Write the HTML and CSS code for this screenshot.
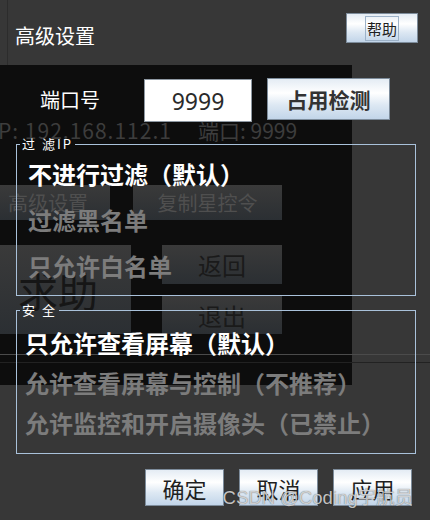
FILE: index.html
```html
<!DOCTYPE html>
<html lang="zh-CN">
<head>
    <meta charset="UTF-8">
    <meta name="viewport" content="width=device-width, initial-scale=1.0">
    <title>高级设置</title>
    <link rel="stylesheet" href="styles.css">
</head>
<body>
    <!-- main window behind the dialog -->
    <div class="bg">
        <div class="bg-head"></div>
        <div class="bg-main">
            <div class="bg-panel">
                <p class="bg-ip"><span class="bg-addr">P: 192.168.112.1</span><span>端口: 9999</span></p>
                <div class="bg-row">
                    <div class="bg-btn bg-set">高级设置</div>
                    <div class="bg-btn bg-copy">复制星控令</div>
                </div>
                <div class="bg-row bg-row2">
                    <div class="bg-btn bg-help">求助</div>
                    <div class="bg-col">
                        <div class="bg-btn bg-back">返回</div>
                        <div class="bg-btn bg-exit">退出</div>
                    </div>
                </div>
            </div>
        </div>
        <div class="bg-rule"></div>
        <div class="bg-strip"><div class="bg-black"></div></div>
        <div class="bg-rule dark"></div>
        <div class="bg-strip tall"><div class="bg-black"></div></div>
    </div>

    <!-- settings dialog -->
    <div class="dlg">
        <div class="dlg-head">
            <h1 class="dlg-title">高级设置</h1>
            <button class="btn btn-help"><span class="focus">帮助</span></button>
        </div>

        <div class="port-row">
            <label class="port-label">端口号</label>
            <input class="port-input" type="text" value="9999">
            <button class="btn btn-check">占用检测</button>
        </div>

        <fieldset class="group group-ip">
            <legend>过 滤IP</legend>
            <ul class="opts">
                <li class="on">不进行过滤（默认）</li>
                <li>过滤黑名单</li>
                <li>只允许白名单</li>
            </ul>
        </fieldset>

        <fieldset class="group group-safe">
            <legend>安 全</legend>
            <ul class="opts">
                <li class="on">只允许查看屏幕（默认）</li>
                <li>允许查看屏幕与控制（不推荐）</li>
                <li>允许监控和开启摄像头（已禁止）</li>
            </ul>
        </fieldset>

        <div class="actions">
            <button class="btn btn-act">确定</button>
            <button class="btn btn-act">取消</button>
            <button class="btn btn-act">应用</button>
        </div>
    </div>

    <div class="watermark">CSDN @Coding宇航员</div>
</body>
</html>
```

FILE: styles.css
```css
* { margin: 0; padding: 0; box-sizing: border-box; }
body {
    position: relative;
    width: 430px;
    height: 520px;
    overflow: hidden;
    background: #373737;
    font-family: "Noto Sans CJK SC", "Noto Sans", sans-serif;
    color: #fff;
}

/* background window */
.bg-head { height: 65px; margin-left: 7px; border-left: 1px solid #2c2c2c; }
.bg-main { display: flex; }
.bg-panel { width: 352px; height: 289px; background: #0d0d0d; padding-top: 51px; }
.bg-ip {
    display: flex;
    margin-left: -2px;
    font-size: 21px;
    line-height: 28px;
    color: #3d3d3d;
    white-space: nowrap;
}
.bg-addr { width: 200px; letter-spacing: 1px; }
.bg-row { display: flex; gap: 23px; margin-top: 41px; }
.bg-row2 { gap: 31px; margin-top: 25px; }
.bg-btn {
    display: flex;
    align-items: center;
    justify-content: center;
    background: linear-gradient(#3a3a3a, #2b2f33);
    white-space: nowrap;
}
.bg-set { width: 110px; height: 35px; justify-content: flex-start; padding-left: 8px; font-size: 20px; color: #4f4f4f; }
.bg-copy { width: 149px; height: 35px; font-size: 20px; color: #4f4f4f; }
.bg-help { width: 131px; height: 89px; justify-content: flex-start; padding-left: 18px; font-size: 40px; color: #161616; }
.bg-col { display: flex; flex-direction: column; gap: 12px; width: 120px; }
.bg-back { height: 39px; font-size: 24px; color: #1a1a1a; }
.bg-exit { height: 38px; font-size: 24px; color: #1a1a1a; }
.bg-rule { height: 1px; background: #4b4b4b; }
.bg-rule.dark { background: #222; }
.bg-strip { display: flex; height: 7px; }
.bg-strip.tall { height: 22px; }
.bg-black { width: 352px; background: #0d0d0d; }

/* dialog */
.dlg { position: absolute; inset: 0; padding: 13px 12px 0 16px; }
.dlg-head { display: flex; justify-content: space-between; align-items: flex-start; }
.dlg-title { margin: 8px 0 0 -1px; font-size: 20px; font-weight: 400; line-height: 30px; }

.btn {
    font-family: "Noto Sans CJK SC", sans-serif;
    color: #1f1f1f;
    border: 1px solid #7d8c9b;
    background: linear-gradient(#e4ecf4 0%, #ffffff 35%, #dde8f3 65%, #c2d5e9 100%);
    display: flex;
    align-items: center;
    justify-content: center;
}
.btn-help { width: 72px; height: 30px; font-size: 15px; }
.focus { display: block; width: 34px; height: 25px; line-height: 23px; border: 1px solid #9db2c8; text-align: center; }

.port-row { display: flex; align-items: flex-start; margin-top: 27px; height: 44px; }
.port-label { margin-left: 24px; width: 60px; font-size: 20px; line-height: 44px; }
.port-input {
    width: 108px;
    height: 43px;
    margin: 1px 0 0 44px;
    border: 1px solid #8e98a2;
    background: #fff;
    text-align: center;
    font-family: "Noto Sans", sans-serif;
    font-size: 23px;
    color: #2a2a2a;
    outline: none;
}
.btn-check { width: 123px; height: 42px; margin-left: 15px; font-size: 21px; font-weight: 700; color: #333; }

.group { width: 400px; border: 1px solid #a9c1da; padding: 0 0 6px; }
.group legend { margin-left: 3px; padding: 0 2px; font-size: 13px; line-height: 14px; letter-spacing: 2px; }
.group-ip { margin-top: 15px; }
.group-ip .opts { padding-left: 11px; }
.group-ip li { line-height: 46px; }
.group-safe { margin-top: 7px; padding-bottom: 10px; }
.group-safe .opts { padding: 6px 0 0 8px; }
.group-safe li { line-height: 40px; }
.opts { list-style: none; }
.opts li { font-size: 24px; font-weight: 700; color: #7c7c7c; white-space: nowrap; }
.opts li.on { color: #fff; }

.actions { display: flex; justify-content: flex-end; gap: 15px; width: 400px; padding-right: 4px; margin-top: 15px; }
.btn-act { width: 79px; height: 37px; font-size: 22px; }

.watermark {
    position: absolute;
    right: 17px;
    top: 487px;
    font-family: "Liberation Sans", "Noto Sans CJK SC", sans-serif;
    font-size: 18.5px;
    line-height: 21px;
    color: rgba(226, 226, 226, 0.85);
    text-shadow: 0 0 1px rgba(0, 0, 0, 0.6);
    white-space: nowrap;
}
```
